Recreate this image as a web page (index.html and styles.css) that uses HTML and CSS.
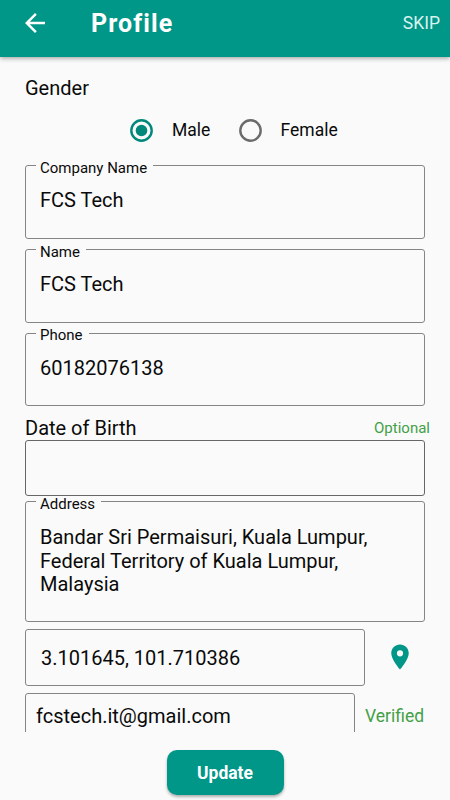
FILE: index.html
```html
<!DOCTYPE html>
<html lang="en">
<head>
    <meta charset="UTF-8">
    <meta name="viewport" content="width=device-width, initial-scale=1.0">
    <title>Profile</title>
    <link rel="stylesheet" href="styles.css">
</head>
<body>
    <header>
        <svg class="back" viewBox="0 0 24 24" fill="currentColor"><path d="M20 11H7.83l5.59-5.59L12 4l-8 8 8 8 1.41-1.41L7.83 13H20v-2z"/></svg>
        <h1>Profile</h1>
        <a class="skip">SKIP</a>
    </header>

    <main>
        <div class="heading">Gender</div>
        <div class="radios">
            <svg class="radio checked" viewBox="0 0 23 23"><circle class="ring" cx="11.5" cy="11.5" r="10.2"/><circle class="dot" cx="11.5" cy="11.5" r="5.8"/></svg>
            <span class="radio-text male">Male</span>
            <svg class="radio" viewBox="0 0 23 23"><circle class="ring" cx="11.5" cy="11.5" r="10.2"/></svg>
            <span class="radio-text">Female</span>
        </div>

        <div class="field">
            <label>Company Name</label>
            <p>FCS Tech</p>
        </div>
        <div class="field">
            <label>Name</label>
            <p>FCS Tech</p>
        </div>
        <div class="field phone">
            <label>Phone</label>
            <p>60182076138</p>
        </div>

        <div class="birth">
            <div class="heading">Date of Birth</div>
            <span class="optional">Optional</span>
        </div>
        <div class="field empty"></div>

        <div class="field address">
            <label>Address</label>
            <p>Bandar Sri Permaisuri, Kuala Lumpur, Federal Territory of Kuala Lumpur, Malaysia</p>
        </div>

        <div class="row">
            <div class="field location">
                <p>3.101645, 101.710386</p>
            </div>
            <svg class="pin" viewBox="0 0 24 24" fill="currentColor"><path d="M12 2C8.13 2 5 5.13 5 9c0 5.25 7 13 7 13s7-7.75 7-13c0-3.87-3.13-7-7-7zm0 9.5a2.5 2.5 0 0 1 0-5 2.5 2.5 0 0 1 0 5z"/></svg>
        </div>

        <div class="row">
            <div class="field email">
                <p>fcstech.it@gmail.com</p>
            </div>
            <span class="verified">Verified</span>
        </div>
    </main>

    <footer>
        <button>Update</button>
    </footer>
</body>
</html>
```
FILE: styles.css
```css
* {
    box-sizing: border-box;
}
body {
    margin: 0;
    height: 800px;
    display: flex;
    flex-direction: column;
    overflow: hidden;
    font-family: Roboto, sans-serif;
    background-color: #fafafa;
    color: #0a0a0a;
}
header {
    display: flex;
    align-items: center;
    flex-shrink: 0;
    height: 57px;
    padding: 0 10px 11px 20px;
    background-color: #009688;
    color: #ffffff;
    box-shadow: 0 1px 5px rgba(0, 0, 0, 0.4);
}
.back {
    width: 30px;
    height: 30px;
}
h1 {
    margin: 2px 0 0 41px;
    font-size: 25px;
    line-height: 30px;
    font-weight: bold;
    letter-spacing: 1.1px;
}
.skip {
    margin-left: auto;
    font-size: 17.5px;
    color: #d9f3ee;
}
main {
    height: 675px;
    padding: 19px 25px 0;
    overflow: hidden;
}
.heading {
    font-size: 20px;
    line-height: 24px;
}
.radios {
    display: flex;
    align-items: center;
    height: 24px;
    margin: 18px 0 23px 105.4px;
}
.radio {
    width: 23px;
    height: 23px;
    color: #6b6b6b;
}
.radio.checked {
    color: #00897b;
}
.ring {
    fill: none;
    stroke: currentColor;
    stroke-width: 2.4;
}
.dot {
    fill: currentColor;
}
.radio-text {
    font-size: 17.5px;
    margin-left: 18.6px;
}
.male {
    width: 67px;
}
.field {
    position: relative;
    height: 74px;
    margin-bottom: 10px;
    padding: 22px 14px 0;
    border: 1px solid #858585;
    border-radius: 3px;
}
.field label {
    position: absolute;
    top: -6px;
    left: 10px;
    padding: 0 6px 0 4px;
    font-size: 15px;
    line-height: 16px;
    background-color: #fafafa;
}
.field p {
    margin: 0;
    font-size: 20px;
    line-height: 24px;
}
.field.phone {
    height: 73px;
}
.field.phone label {
    top: -7px;
}
.birth {
    display: flex;
    justify-content: space-between;
    align-items: center;
    height: 24px;
    margin-right: -5px;
}
.optional {
    font-size: 15px;
    color: #43a047;
}
.field.empty {
    height: 56px;
    margin-bottom: 5px;
    border-color: #666666;
}
.field.address {
    height: 121px;
    margin-bottom: 7px;
    padding-top: 24px;
}
.field.address p {
    line-height: 23.7px;
}
.row {
    display: flex;
    align-items: center;
    margin-bottom: 7px;
}
.field.location {
    width: 340px;
    height: 57px;
    margin: 0;
    padding: 16px 15px 0;
}
.pin {
    width: 30px;
    height: 30px;
    margin: -1px 0 0 20px;
    color: #009688;
}
.field.email {
    width: 330px;
    height: 57px;
    margin: 0;
    padding: 10px 10px 0;
}
.verified {
    margin: -12px 0 0 10px;
    font-size: 17.5px;
    color: #43a047;
}
footer {
    display: flex;
    justify-content: center;
    padding-top: 18px;
}
button {
    width: 117px;
    height: 45px;
    padding: 0;
    border: none;
    border-radius: 10px;
    background-color: #009688;
    color: #ffffff;
    font-family: inherit;
    font-size: 17.5px;
    font-weight: bold;
    box-shadow: 0 2px 3px rgba(0, 0, 0, 0.3);
}
```
